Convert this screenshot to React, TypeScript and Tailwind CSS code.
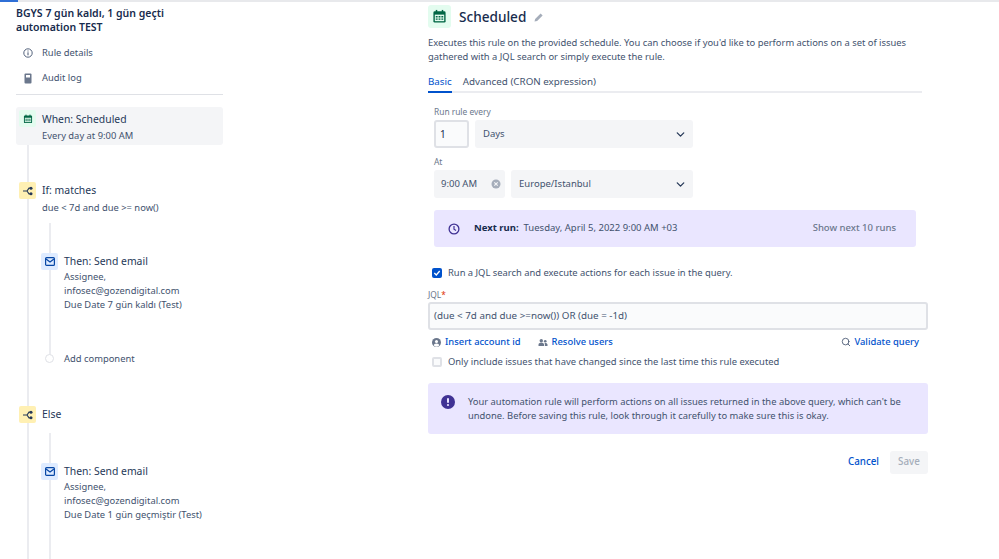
import { ChevronDown, Search } from "lucide-react";

const font = "font-['Noto_Sans','Open_Sans',sans-serif]";

function CalendarIcon({ size }: { size: number }) {
  return (
    <svg width={size} height={size} viewBox="0 0 16 16" fill="none">
      <rect x="1.5" y="2.5" width="13" height="12" rx="1.5" fill="#006644" />
      <rect x="3" y="6" width="10" height="7" fill="#e3fcef" />
      <rect x="4" y="1" width="1.6" height="3" fill="#006644" />
      <rect x="10.4" y="1" width="1.6" height="3" fill="#006644" />
      <path d="M4 7.5h2v1.5H4zM7 7.5h2v1.5H7zM10 7.5h2v1.5h-2zM4 10h2v1.5H4zM7 10h2v1.5H7zM10 10h2v1.5h-2z" fill="#006644" />
    </svg>
  );
}

function BranchIcon() {
  return (
    <svg width="10" height="10" viewBox="0 0 10 10" fill="none">
      <path d="M0 5h4M4 5l2-2.8h2M4 5l2 2.8h2" stroke="#253858" strokeWidth="1.2" />
      <circle cx="8" cy="2.2" r="1.5" fill="#253858" />
      <circle cx="8" cy="7.8" r="1.5" fill="#253858" />
    </svg>
  );
}

function MailIcon() {
  return (
    <svg width="10" height="9" viewBox="0 0 10 9" fill="none">
      <rect x="0.6" y="0.6" width="8.8" height="7.8" rx="1" stroke="#0747a6" strokeWidth="1.2" fill="#deebff" />
      <path d="M1 2l4 3 4-3" stroke="#0747a6" strokeWidth="1.3" />
    </svg>
  );
}

function StepIcon({ type }: { type: "if" | "mail" }) {
  return (
    <div
      className={`relative flex h-[17px] w-[17px] shrink-0 items-center justify-center rounded-[2px] ${
        type === "if" ? "bg-[#fff0b3]" : "bg-[#deebff]"
      }`}
    >
      {type === "if" ? <BranchIcon /> : <MailIcon />}
    </div>
  );
}

function EmailStep({ subject }: { subject: string }) {
  return (
    <div className="flex gap-[6px]">
      <StepIcon type="mail" />
      <div className="pt-px">
        <div className="text-[10.4px] leading-[15px] text-[#253858]">Then: Send email</div>
        <div className="mt-[1px] text-[9.4px] leading-[14px] text-[#42526e]">
          <div>Assignee,</div>
          <div>infosec@gozendigital.com</div>
          <div>{subject}</div>
        </div>
      </div>
    </div>
  );
}

function Sidebar() {
  return (
    <aside className="w-[223px] shrink-0 pl-4">
      <h1 className="mt-[4px] text-[10.5px] font-semibold leading-[14px] text-[#172b4d]">
        BGYS 7 gün kaldı, 1 gün geçti
        <br />
        automation TEST
      </h1>
      <div className="mt-[12px] flex h-[14px] items-center gap-[9px] pl-[7px] text-[9.4px] text-[#42526e]">
        <svg width="10" height="10" viewBox="0 0 10 10" fill="none" className="shrink-0">
          <circle cx="5" cy="5" r="4.2" stroke="#42526e" strokeWidth="0.9" />
          <rect x="4.5" y="4.3" width="1" height="3" fill="#42526e" />
          <rect x="4.5" y="2.5" width="1" height="1" fill="#42526e" />
        </svg>
        Rule details
      </div>
      <div className="mt-[11px] flex h-[14px] items-center gap-[9px] pl-[7px] text-[9.4px] text-[#42526e]">
        <svg width="10" height="11" viewBox="0 0 10 11" fill="none" className="shrink-0">
          <rect x="1.5" y="0.5" width="7" height="10" rx="1" fill="#6b778c" />
          <rect x="3" y="2" width="4" height="2.5" fill="#fff" />
        </svg>
        Audit log
      </div>
      <div className="mt-[9px] h-px bg-[#dfe1e6]" />

      <div className="relative mt-3 h-[452px]">
        <div className="absolute bottom-0 left-[11px] top-[10px] w-[2px] bg-[#ebecf0]" />
        <div className="relative flex h-[38px] rounded-[3px] bg-[#f4f5f7] pl-[3px] pt-[3px]">
          <div className="flex h-[17px] w-[17px] shrink-0 items-center justify-center rounded-[2px] bg-[#e3fcef]">
            <CalendarIcon size={10} />
          </div>
          <div className="ml-[6px]">
            <div className="mt-[2px] text-[10.4px] leading-[15px] text-[#253858]">When: Scheduled</div>
            <div className="mt-[2px] text-[9.4px] leading-[13px] text-[#42526e]">Every day at 9:00 AM</div>
          </div>
        </div>

        <div className="relative ml-[3px] mt-[37px] flex gap-[6px]">
          <StepIcon type="if" />
          <div className="pt-px">
            <div className="text-[10.4px] leading-[15px] text-[#253858]">If: matches</div>
            <div className="mt-[3px] text-[9.4px] leading-[14px] text-[#42526e]">due &lt; 7d and due &gt;= now()</div>
          </div>
        </div>

        <div className="relative ml-[25px] mt-[8px] h-[136px]">
          <div className="absolute bottom-0 left-[8px] top-0 w-[2px] bg-[#ebecf0]" />
          <div className="relative pt-[30px]">
            <EmailStep subject="Due Date 7 gün kaldı (Test)" />
            <div className="ml-[4px] mt-[40px] flex items-center gap-[10px]">
              <div className="h-[9px] w-[9px] rounded-full border border-[#dfe1e6] bg-white" />
              <span className="text-[9.4px] leading-[13px] text-[#42526e]">Add component</span>
            </div>
          </div>
        </div>

        <div className="relative ml-[3px] mt-[47px] flex items-center gap-[6px]">
          <StepIcon type="if" />
          <span className="text-[10.4px] leading-[15px] text-[#253858]">Else</span>
        </div>

        <div className="relative ml-[25px] mt-[10px] h-[136px]">
          <div className="absolute bottom-0 left-[8px] top-0 w-[2px] bg-[#ebecf0]" />
          <div className="relative pt-[30px]">
            <EmailStep subject="Due Date 1 gün geçmiştir (Test)" />
          </div>
        </div>
      </div>
    </aside>
  );
}

function Select({ label, width }: { label: string; width: string }) {
  return (
    <div className={`flex h-7 items-center justify-between rounded-[3px] bg-[#f4f5f7] pl-2 pr-[6px] text-[9.5px] text-[#42526e] ${width}`}>
      {label}
      <ChevronDown size={13} strokeWidth={2.4} className="text-[#253858]" />
    </div>
  );
}

function RuleForm() {
  return (
    <main className="ml-[205px] w-[500px] shrink-0">
      <div className="mt-[3px] flex h-[23px] items-center">
        <div className="flex h-[23px] w-[23px] items-center justify-center rounded-[3px] bg-[#e3fcef]">
          <CalendarIcon size={15} />
        </div>
        <span className="ml-2 mt-[2px] text-[13.6px] font-medium text-[#172b4d]">Scheduled</span>
        <svg width="10" height="10" viewBox="0 0 10 10" className="ml-[8px]">
          <path d="M0.5 9.5l0.6-2.6 5.5-5.5 2 2-5.5 5.5z" fill="#a5adba" />
        </svg>
      </div>
      <p className="mt-[8px] w-[494px] text-[9.4px] leading-[14px] text-[#42526e]">
        Executes this rule on the provided schedule. You can choose if you'd like to perform actions on a set of issues
        gathered with a JQL search or simply execute the rule.
      </p>

      <div className="mt-[10px] flex w-[494px] gap-[11px] border-b-2 border-[#ebecf0] text-[9.8px] leading-[16px] text-[#42526e]">
        <div className="relative pb-[1px] text-[#0052cc]">
          Basic
          <div className="absolute -bottom-[2px] left-0 right-0 h-[2px] bg-[#0052cc]" />
        </div>
        <div className="pb-[1px]">Advanced (CRON expression)</div>
      </div>

      <div className="ml-[6px]">
        <div className="mt-[13px] text-[8.4px] leading-[12px] text-[#6b778c]">Run rule every</div>
        <div className="mt-[2px] flex gap-[6px]">
          <div className="flex h-7 w-[35px] items-center rounded-[3px] border-2 border-[#dfe1e6] bg-[#fafbfc] pl-[4px] text-[10px] text-[#172b4d]">1</div>
          <Select label="Days" width="w-[218px]" />
        </div>
        <div className="mt-[8px] text-[8.4px] leading-[12px] text-[#6b778c]">At</div>
        <div className="mt-[2px] flex gap-[6px]">
          <div className="flex h-7 w-[71px] items-center justify-between rounded-[3px] bg-[#f4f5f7] pl-[7px] pr-[4px] text-[9.5px] text-[#42526e]">
            9:00 AM
            <svg width="10" height="10" viewBox="0 0 10 10">
              <circle cx="5" cy="5" r="4.5" fill="#a5adba" />
              <path d="M3.3 3.3l3.4 3.4M6.7 3.3l-3.4 3.4" stroke="#f4f5f7" strokeWidth="1.1" />
            </svg>
          </div>
          <Select label="Europe/Istanbul" width="w-[182px]" />
        </div>
      </div>

      <div className="ml-[6px] mt-[12px] flex h-[37px] w-[482px] items-center rounded-[3px] bg-[#eae6ff] pl-[14px] pr-[20px] text-[9.5px]">
        <svg width="12" height="12" viewBox="0 0 12 12" fill="none" className="shrink-0">
          <circle cx="6" cy="6" r="4.9" stroke="#403294" strokeWidth="1.3" />
          <path d="M6 3v3.2l2 1.2" stroke="#403294" strokeWidth="1.2" />
        </svg>
        <span className="ml-[14px] font-bold text-[#172b4d]">Next run:</span>
        <span className="ml-[5px] text-[#42526e]">Tuesday, April 5, 2022 9:00 AM +03</span>
        <span className="ml-auto font-medium text-[#6b778c]">Show next 10 runs</span>
      </div>

      <label className="ml-[4px] mt-[19px] flex h-[14px] items-center gap-[6px] text-[9.4px] text-[#42526e]">
        <span className="flex h-[10px] w-[10px] items-center justify-center rounded-[2px] bg-[#0052cc]">
          <svg width="8" height="8" viewBox="0 0 8 8" fill="none">
            <path d="M1.3 4l2 2 3.4-4" stroke="#fff" strokeWidth="1.3" />
          </svg>
        </span>
        Run a JQL search and execute actions for each issue in the query.
      </label>

      <div className="mt-[9px] text-[8.4px] leading-[12px] text-[#6b778c]">
        JQL<span className="text-[#de350b]">*</span>
      </div>
      <div className="mt-[1px] flex h-7 w-[500px] items-center rounded-[3px] border-2 border-[#dfe1e6] bg-[#fafbfc] pl-1 text-[9.8px] text-[#42526e]">
        (due &lt; 7d and due &gt;=now()) OR (due = -1d)
      </div>

      <div className="mt-[5px] flex h-[14px] items-center pl-[4px] text-[9.4px] font-medium text-[#0052cc]">
        <svg width="9" height="9" viewBox="0 0 10 10" className="mr-[4px]">
          <circle cx="5" cy="5" r="5" fill="#6b778c" />
          <circle cx="5" cy="3.8" r="1.7" fill="#fff" />
          <path d="M2 8.4a3 2.4 0 016 0 4.4 4.4 0 01-6 0z" fill="#fff" />
        </svg>
        Insert account id
        <svg width="10" height="9" viewBox="0 0 11 10" className="ml-[17px] mr-[4px]">
          <circle cx="3.6" cy="3" r="1.9" fill="#6b778c" />
          <circle cx="8" cy="3.6" r="1.5" fill="#6b778c" />
          <path d="M0.5 9V7.4c0-1.4 1.3-2 3.1-2s3.1.6 3.1 2V9zM7.6 9V7c0-.6-.2-1-.6-1.4 1.9-.4 3.5.3 3.5 1.6V9z" fill="#6b778c" />
        </svg>
        Resolve users
        <Search size={10} strokeWidth={2} className="ml-auto mr-[3px] text-[#42526e]" />
        <span className="mr-[9px]">Validate query</span>
      </div>

      <label className="ml-[4px] mt-[6px] flex h-[14px] items-center gap-[6px] text-[9.4px] text-[#42526e]">
        <span className="h-[10px] w-[10px] rounded-[2px] border-2 border-[#dfe1e6] bg-[#fafbfc]" />
        Only include issues that have changed since the last time this rule executed
      </label>

      <div className="mt-[14px] flex h-[51px] w-[500px] items-start rounded-[3px] bg-[#eae6ff] pl-[13px] pr-[20px] pt-[12px] text-[9.4px] leading-[14px] text-[#42526e]">
        <svg width="14" height="14" viewBox="0 0 14 14" className="shrink-0">
          <circle cx="7" cy="7" r="7" fill="#403294" />
          <rect x="6" y="3" width="2" height="5" rx="1" fill="#eae6ff" />
          <circle cx="7" cy="10" r="1.1" fill="#eae6ff" />
        </svg>
        <p className="ml-[13px]">
          Your automation rule will perform actions on all issues returned in the above query, which can't be undone.
          Before saving this rule, look through it carefully to make sure this is okay.
        </p>
      </div>

      <div className="mt-[17px] flex w-[500px] items-center justify-end gap-[11px] text-[9.8px] font-medium">
        <span className="text-[#0052cc]">Cancel</span>
        <span className="flex h-[23px] w-[38px] items-center justify-center rounded-[3px] bg-[#f4f5f7] text-[#a5adba]">Save</span>
      </div>
    </main>
  );
}

export default function App() {
  return (
    <div className={`h-[559px] w-[999px] overflow-hidden bg-white ${font}`}>
      <div className="relative h-[2px] bg-[#e8e9ec]">
        <div className="h-[2px] w-[18px] bg-[#2f6fd6]" />
      </div>
      <div className="flex">
        <Sidebar />
        <RuleForm />
      </div>
    </div>
  );
}
